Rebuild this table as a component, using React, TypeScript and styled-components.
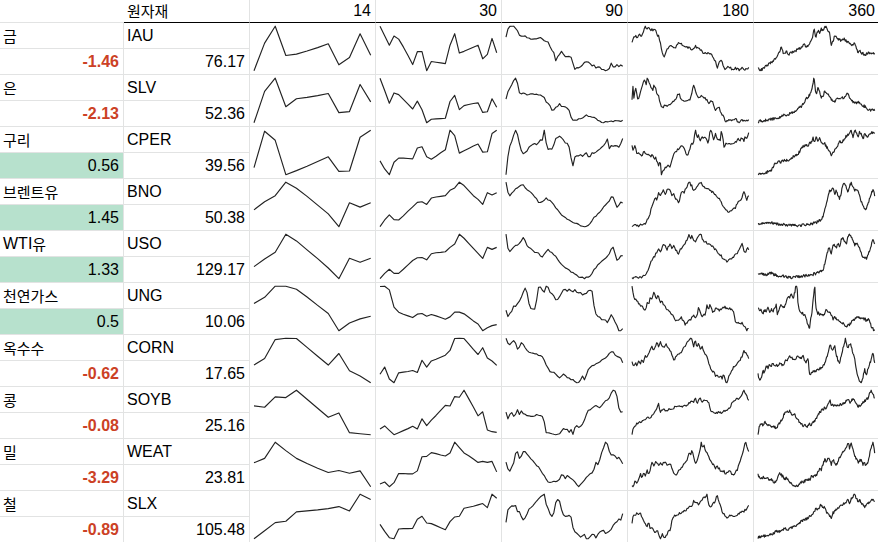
import React from "react";
import styled, { createGlobalStyle, css } from "styled-components";

const GlobalStyle = createGlobalStyle`
  html, body {
    margin: 0;
    padding: 0;
    background: #ffffff;
    overflow: hidden;
  }
  body {
    font-family: "Liberation Sans", Arial, "Noto Sans CJK KR", sans-serif;
  }
`;

const GRID = "#e2e3e3";

type Row = {
  name: string;
  change: string;
  ticker: string;
  price: string;
  s14: number[];
  s30: number[];
  a90: string;
  a180: string;
  a360: string;
};

// y values are "screen down" units: larger = lower on the chart
const ROWS: Row[] = [
  {
    name: "금", change: "-1.46", ticker: "IAU", price: "76.17",
    s14: [142, 62, 13, 98, 94, 85, 75, 64, 125, 104, 35, 97],
    s30: [14, 42, 70, 43, 52, 75, 100, 127, 89, 89, 145, 118, 120, 122, 124, 70, 36, 93, 88, 82, 76, 70, 110, 97, 50, 92],
    a90: "0,47 5,22 12,13 22,13 30,20 37,30 42,42 50,45 57,42 65,47 75,50 85,52 95,52 100,45 105,50 115,55 122,60 128,62 135,80 140,90 145,90 148,125 150,110 160,95 168,85 175,100 185,102 195,105 200,120 205,140 215,135 225,133 232,125 240,115 250,120 256,130 262,125 270,135 280,132 290,140 300,145 310,135 315,120 320,133 330,130 335,125 340,132 345,125 350,130",
    a180: "0,60 5,45 10,40 15,50 22,35 28,40 35,25 40,15 45,25 50,13 55,25 60,22 65,25 70,20 75,40 80,40 85,60 90,90 95,103 100,95 105,80 110,75 120,70 130,75 140,60 148,65 155,70 160,72 168,75 175,75 180,85 185,80 190,70 195,75 205,82 215,90 225,90 235,92 240,100 245,110 250,115 255,135 260,120 265,110 270,115 278,140 285,130 295,132 300,140 310,135 320,140 330,133 340,138 350,133",
    a360: "0,140 10,145 20,138 30,130 40,122 50,115 55,108 60,100 65,90 70,78 75,95 80,100 85,90 90,100 100,95 110,90 120,85 130,80 140,70 145,78 150,75 160,60 165,45 168,20 172,50 175,45 180,30 185,35 190,25 195,30 200,20 205,15 210,30 215,40 220,75 225,60 230,45 240,55 250,60 260,55 270,65 280,70 290,68 295,80 300,95 305,90 310,95 320,100 330,95 340,100 350,97",
  },
  {
    name: "은", change: "-2.13", ticker: "SLV", price: "52.36",
    s14: [141, 51, 13, 95, 72, 68, 63, 57, 112, 109, 31, 81],
    s30: [14, 50, 87, 57, 62, 76, 90, 104, 81, 106, 144, 134, 133, 132, 131, 82, 64, 106, 94, 91, 88, 86, 114, 112, 74, 99],
    a90: "0,74 5,55 10,45 18,30 25,15 30,13 35,30 40,55 45,60 55,58 65,62 75,58 85,60 95,62 105,65 115,70 122,85 130,90 135,100 140,110 145,103 155,95 160,88 165,95 175,98 185,102 190,110 195,125 200,138 210,135 220,133 230,130 240,122 250,125 260,127 270,132 280,138 290,142 300,140 310,138 320,140 330,137 340,140 350,136",
    a180: "0,80 3,35 6,80 10,40 14,60 18,80 22,70 28,50 33,30 38,20 42,40 47,13 52,35 56,40 62,55 66,35 70,45 75,60 80,65 85,90 90,100 95,95 100,95 110,90 120,88 130,75 140,60 145,70 150,80 160,78 168,80 175,75 180,55 185,35 190,50 195,65 200,70 210,68 220,72 230,85 240,80 245,95 250,110 255,100 260,95 265,110 270,120 275,125 280,138 290,133 300,135 310,130 320,140 330,135 340,138 350,133",
    a360: "0,145 20,142 40,138 60,135 70,128 80,124 90,126 100,118 110,115 120,108 130,100 140,85 145,75 150,72 155,65 160,55 165,35 168,12 172,50 175,70 180,45 185,60 190,75 195,70 200,55 210,65 220,80 230,85 240,75 250,78 260,70 270,60 275,75 280,82 290,90 300,88 310,95 320,100 330,110 340,112 350,110",
  },
  {
    name: "구리", change: "0.56", ticker: "CPER", price: "39.56",
    s14: [124, 16, 43, 145, 133, 120, 106, 92, 135, 134, 34, 13],
    s30: [104, 128, 145, 108, 96, 96, 97, 98, 66, 62, 92, 99, 90, 80, 71, 13, 29, 81, 74, 67, 60, 54, 78, 77, 23, 13],
    a90: "0,145 4,95 8,85 12,60 18,45 25,25 30,15 35,30 40,55 45,70 50,90 55,75 60,90 65,70 75,60 85,55 90,60 95,55 105,40 110,45 115,13 120,50 125,70 130,75 135,60 140,80 145,50 150,40 155,35 165,35 170,40 175,50 180,55 185,55 190,65 195,95 200,125 205,95 215,90 225,85 230,90 240,80 250,100 255,85 260,80 265,85 275,75 285,65 295,60 305,40 310,70 315,60 320,65 330,60 340,65 350,40",
    a180: "0,60 3,78 8,65 12,70 15,85 20,80 25,85 30,90 35,80 45,85 55,95 60,85 65,100 70,95 75,105 80,120 85,105 88,145 92,130 100,125 108,115 115,120 120,100 125,90 130,80 140,70 148,60 155,65 160,80 168,90 172,75 178,60 185,55 190,15 195,40 200,35 205,50 210,40 215,45 220,35 228,60 235,15 240,30 245,45 250,30 255,40 260,50 265,45 268,20 272,35 275,65 280,60 290,55 300,58 310,52 320,45 325,48 330,40 335,50 340,35 345,45 350,30",
    a360: "0,140 15,142 30,135 40,130 50,115 60,105 70,108 80,100 90,105 100,95 110,90 120,85 130,70 140,60 150,60 160,50 165,40 170,55 175,35 180,50 185,40 190,55 200,55 205,65 210,70 215,75 220,90 225,80 230,75 235,65 240,60 245,50 250,55 260,40 270,30 275,25 280,20 285,35 290,15 295,25 300,35 305,20 310,30 315,40 320,30 330,35 340,25 350,22",
  },
  {
    name: "브렌트유", change: "1.45", ticker: "BNO", price: "50.38",
    s14: [94, 70, 52, 12, 30, 54, 80, 106, 144, 73, 86, 73],
    s30: [144, 124, 109, 123, 124, 112, 98, 85, 72, 70, 78, 59, 56, 54, 52, 36, 29, 12, 22, 37, 52, 63, 78, 43, 50, 43],
    a90: "0,14 5,40 10,55 15,50 25,40 35,30 45,25 55,25 60,35 70,40 80,50 90,60 100,75 110,70 120,62 125,65 135,70 145,80 155,95 165,105 175,115 185,120 195,125 205,130 215,135 225,140 235,143 245,138 255,130 265,115 275,105 285,95 295,85 305,75 315,60 320,55 325,70 330,80 335,95 340,75 350,73",
    a180: "0,144 10,140 20,142 30,140 40,135 50,120 55,105 60,85 65,75 70,60 75,70 80,50 85,55 90,45 95,40 100,55 105,40 110,35 115,45 120,60 125,50 130,65 135,70 140,80 145,55 150,45 155,50 160,40 165,35 170,15 175,25 180,30 185,45 190,40 195,35 200,20 205,18 210,25 215,30 220,35 230,40 240,45 250,55 260,65 270,80 280,95 290,102 300,100 310,90 320,75 330,65 335,45 340,58 345,70 350,55",
    a360: "0,135 20,133 40,130 60,135 80,137 100,138 120,140 140,137 160,135 175,130 185,125 195,115 200,95 205,80 210,50 215,35 220,40 225,25 230,45 235,35 240,55 245,60 250,40 255,20 260,15 265,30 270,45 275,20 280,15 285,25 290,35 295,30 300,40 305,55 310,70 315,80 320,90 325,88 330,75 335,60 340,45 345,30 350,50",
  },
  {
    name: "WTI유", change: "1.33", ticker: "USO", price: "129.17",
    s14: [109, 86, 66, 12, 32, 59, 85, 113, 145, 84, 96, 84],
    s30: [144, 128, 116, 128, 128, 116, 103, 90, 82, 81, 88, 70, 67, 66, 64, 51, 41, 12, 24, 39, 54, 69, 84, 51, 57, 51],
    a90: "0,16 5,55 10,65 15,60 25,50 35,45 45,35 55,20 60,45 70,55 80,60 90,70 95,60 100,75 110,80 120,65 125,60 135,68 145,75 155,88 165,100 175,112 185,118 195,125 205,130 215,138 225,140 235,143 245,140 255,135 260,125 265,118 275,105 285,95 295,88 305,80 315,60 320,50 325,65 330,80 335,100 340,80 350,78",
    a180: "0,144 10,140 20,142 30,140 40,135 50,115 55,100 60,90 65,85 70,75 75,70 80,60 85,65 90,55 95,45 100,48 105,60 110,50 115,40 120,55 125,45 130,60 135,65 140,75 145,60 150,55 155,50 160,40 165,30 170,15 175,30 180,20 185,35 190,40 195,30 200,20 205,13 210,25 215,35 225,40 235,45 245,55 255,65 265,75 275,90 285,95 295,90 305,80 315,70 325,55 330,45 335,60 340,70 345,55 350,60",
    a360: "0,130 20,132 40,128 60,135 80,137 100,140 120,138 140,135 160,132 175,128 185,125 195,118 200,100 205,80 210,60 215,55 220,70 225,50 230,45 235,55 240,40 245,50 250,30 255,25 260,35 265,45 270,20 275,15 280,25 285,30 290,45 295,40 300,50 305,55 310,70 315,80 320,85 325,85 330,75 335,60 340,45 345,30 350,45",
  },
  {
    name: "천연가스", change: "0.5", ticker: "UNG", price: "10.06",
    s14: [64, 46, 13, 13, 22, 45, 70, 94, 145, 122, 110, 102],
    s30: [14, 13, 24, 75, 90, 96, 101, 106, 96, 94, 102, 97, 101, 106, 111, 104, 90, 90, 95, 105, 116, 125, 145, 136, 130, 127],
    a90: "0,85 5,100 10,95 15,90 20,80 25,70 30,75 35,65 40,60 45,55 50,45 55,30 60,25 65,45 70,75 75,80 80,82 85,82 90,75 95,30 100,20 105,25 110,35 115,40 120,25 123,12 127,30 132,40 140,45 145,50 150,60 155,55 160,50 165,45 170,35 175,30 185,35 190,30 195,35 200,40 205,30 210,35 215,45 220,40 225,40 230,45 240,40 250,35 255,30 260,40 265,80 270,95 275,100 285,105 290,110 295,105 300,110 305,115 310,105 315,95 320,100 325,110 330,120 335,125 340,140 345,135 350,130",
    a180: "0,14 3,30 8,55 12,50 18,60 22,65 27,70 32,75 37,80 42,85 45,60 50,70 55,45 60,55 65,30 70,45 75,50 78,40 82,50 86,60 90,55 95,70 100,75 105,80 110,85 115,90 120,95 125,100 130,110 135,115 140,110 148,105 155,115 160,125 165,120 170,115 175,110 180,105 185,95 190,105 195,100 200,75 205,90 210,100 215,95 220,95 225,70 230,80 235,65 240,85 245,90 250,80 255,75 260,85 265,80 270,78 280,75 290,80 300,78 305,90 310,115 315,120 320,118 330,120 335,125 340,130 345,140 350,135",
    a360: "0,80 5,90 10,85 15,95 20,85 25,90 30,80 35,95 40,85 45,90 50,80 55,70 58,100 62,90 65,80 70,70 75,80 80,75 85,60 90,55 95,50 100,45 105,55 110,40 113,25 117,20 120,75 125,85 130,90 135,95 140,100 145,110 150,125 155,135 158,110 162,90 165,60 168,40 170,12 172,60 175,85 178,95 182,90 185,100 190,95 195,100 200,95 205,85 210,95 215,90 220,100 225,110 230,105 240,115 250,120 260,125 265,130 270,120 275,125 280,115 290,110 300,105 310,110 320,108 325,115 330,110 335,115 340,130 345,135 350,140",
  },
  {
    name: "옥수수", change: "-0.62", ticker: "CORN", price: "17.65",
    s14: [92, 73, 17, 13, 14, 40, 66, 92, 58, 109, 124, 144],
    s30: [119, 98, 133, 144, 115, 113, 111, 108, 114, 78, 98, 80, 75, 69, 63, 49, 14, 13, 14, 30, 46, 61, 41, 71, 80, 93],
    a90: "0,14 5,30 10,35 20,25 25,18 30,35 35,50 40,40 45,30 50,30 55,42 60,48 70,55 80,60 90,62 100,65 110,70 120,90 125,100 130,110 135,112 145,115 150,120 155,125 160,128 170,120 175,115 180,125 190,130 200,135 210,140 220,145 225,130 230,125 235,135 240,125 245,110 250,95 255,100 260,90 265,95 275,85 285,80 295,75 305,65 315,55 320,50 325,60 330,65 340,72 345,75 350,85",
    a180: "0,88 5,95 10,90 15,95 20,85 25,90 30,80 35,85 40,70 45,75 50,60 55,55 60,40 65,55 70,40 75,30 80,45 85,30 90,40 95,45 100,35 105,40 110,45 115,55 120,65 125,80 130,75 135,70 140,65 145,60 150,55 155,45 160,40 165,30 170,25 175,15 180,20 185,40 190,25 195,45 200,35 205,50 210,40 215,55 220,65 225,70 230,90 235,100 240,115 245,110 250,125 255,120 260,130 265,125 270,135 275,120 280,140 285,145 290,130 295,120 300,110 305,100 310,95 315,90 320,85 325,80 330,70 335,55 340,60 345,65 350,80",
    a360: "0,115 5,130 10,120 15,105 20,110 25,90 30,95 35,85 40,90 45,80 50,95 55,85 60,90 65,80 70,85 75,88 80,80 85,75 90,70 95,60 100,65 105,70 110,75 115,70 120,60 125,65 130,70 135,60 140,75 145,80 150,70 155,115 160,110 170,105 180,100 190,95 195,90 200,85 205,70 210,55 215,30 220,40 225,45 230,30 235,60 240,75 245,85 250,60 255,40 260,25 262,15 265,30 270,45 275,25 280,35 285,55 290,70 295,100 300,125 305,130 310,140 315,120 320,100 325,115 330,95 335,85 340,70 345,55 350,80",
  },
  {
    name: "콩", change: "-0.08", ticker: "SOYB", price: "25.16",
    s14: [59, 63, 32, 34, 12, 39, 66, 93, 80, 139, 142, 145],
    s30: [128, 119, 132, 145, 139, 133, 127, 120, 128, 98, 118, 102, 88, 73, 58, 60, 32, 34, 13, 38, 63, 89, 77, 131, 136, 138],
    a90: "0,78 5,100 10,85 15,80 20,75 25,100 30,80 35,70 40,85 45,75 50,80 60,85 70,90 80,92 90,85 100,88 110,90 115,105 120,135 130,140 140,142 150,143 160,140 165,135 170,125 175,130 180,125 185,130 190,135 195,130 200,145 205,125 210,115 215,120 220,125 230,110 240,90 245,70 250,75 260,65 270,60 280,65 290,55 300,45 310,35 320,15 325,12 330,25 335,40 340,75 345,78 350,78",
    a180: "0,145 3,125 10,115 20,110 30,105 40,100 50,95 60,90 70,75 75,65 80,55 85,80 90,70 100,75 110,70 120,68 130,65 140,60 150,65 160,60 170,55 180,45 185,50 190,40 195,55 200,45 205,40 210,50 220,45 230,50 235,75 240,80 250,82 260,78 270,80 280,75 290,70 295,65 300,50 310,45 320,40 330,30 335,15 340,25 345,35 350,45",
    a360: "0,145 5,120 10,115 15,120 20,110 25,115 30,118 35,120 40,125 45,120 50,125 55,128 60,120 70,105 75,95 80,80 85,75 90,80 95,75 100,85 105,90 110,85 115,95 120,105 125,110 130,115 135,120 140,118 145,125 150,120 155,115 160,120 165,110 170,105 175,100 180,90 185,80 190,75 195,70 200,65 205,68 210,55 215,40 220,60 225,55 230,60 240,58 250,55 260,50 265,45 270,40 275,50 280,45 285,35 290,48 295,55 300,62 305,60 310,55 315,50 320,45 325,40 330,35 335,20 340,15 345,25 350,35",
  },
  {
    name: "밀", change: "-3.29", ticker: "WEAT", price: "23.81",
    s14: [73, 60, 12, 37, 60, 75, 89, 102, 96, 104, 97, 144],
    s30: [136, 130, 144, 132, 105, 105, 106, 106, 97, 55, 54, 43, 46, 50, 53, 44, 12, 28, 44, 52, 62, 72, 69, 72, 69, 100],
    a90: "0,72 5,90 10,100 15,95 20,80 25,75 30,40 35,45 40,65 45,60 50,45 55,40 60,50 65,55 70,60 80,70 90,80 95,85 100,90 105,100 110,105 115,110 120,120 125,128 135,130 145,128 155,125 160,122 165,110 170,105 175,115 180,120 185,110 195,120 205,128 210,135 215,140 220,145 225,135 230,130 235,125 240,118 250,110 255,100 260,105 265,90 270,75 275,80 280,70 285,55 290,35 295,30 300,13 305,25 310,45 315,55 320,50 325,55 330,60 335,65 340,60 345,70 350,80",
    a180: "0,145 5,140 10,130 15,140 20,125 25,110 30,120 35,105 40,120 45,100 50,115 55,95 60,80 65,90 70,75 75,80 80,85 85,80 90,90 95,80 100,75 105,85 110,80 115,85 120,95 125,105 130,115 135,110 140,100 145,95 150,90 155,85 160,75 165,70 170,60 172,40 175,60 180,45 185,65 190,80 195,75 200,60 205,40 208,20 212,40 215,30 220,45 225,50 230,60 235,75 240,80 245,85 250,100 255,90 260,95 265,100 270,105 275,100 280,110 285,108 290,100 295,105 300,110 305,115 310,105 315,100 320,85 325,75 330,60 335,45 340,20 345,35 350,50",
    a360: "0,110 5,115 10,120 15,115 20,118 25,122 30,118 35,125 40,120 45,128 50,132 55,125 60,115 65,105 70,110 75,115 80,120 85,118 90,125 95,130 100,135 105,140 110,142 115,138 120,140 125,135 130,130 140,128 150,120 155,125 160,115 165,118 170,110 175,112 180,100 185,90 190,95 195,80 200,65 205,75 210,60 215,70 220,80 225,65 230,75 235,80 240,70 245,60 250,55 255,45 260,40 265,30 270,15 275,35 280,20 285,40 290,55 295,65 300,75 305,70 310,65 315,80 320,75 325,85 330,70 335,50 340,30 345,15 350,45",
  },
  {
    name: "철", change: "-0.89", ticker: "SLX", price: "105.48",
    s14: [145, 121, 97, 93, 65, 62, 59, 55, 49, 62, 12, 28],
    s30: [102, 123, 142, 145, 116, 115, 115, 114, 87, 78, 98, 100, 106, 112, 118, 94, 80, 78, 54, 51, 48, 44, 40, 52, 12, 24],
    a90: "0,96 3,60 8,55 12,50 18,45 25,50 30,45 35,65 40,65 45,75 50,85 55,90 60,75 65,65 70,55 80,45 90,35 100,25 110,15 115,12 120,40 125,50 130,65 135,75 140,80 145,60 150,35 155,30 160,30 165,50 170,70 175,80 180,75 190,75 195,80 200,105 205,120 210,125 215,130 220,135 225,140 230,135 235,130 240,140 245,145 250,140 255,135 260,125 265,130 270,140 275,130 280,125 285,120 290,115 295,120 300,130 305,125 310,120 315,115 320,105 325,100 330,95 335,90 340,85 345,90 350,68",
    a180: "0,95 3,80 8,75 15,70 20,75 25,65 30,80 35,95 40,100 45,105 50,95 55,115 60,110 65,120 70,125 75,115 80,130 85,145 90,130 95,135 100,140 105,130 110,120 115,115 120,90 125,80 130,75 140,70 150,65 160,60 170,55 175,45 180,50 185,30 190,40 195,35 200,45 205,35 210,30 215,25 220,20 225,15 230,40 235,50 240,45 245,40 250,35 255,15 260,30 265,45 270,65 275,70 280,75 285,85 290,80 295,75 300,70 305,80 310,75 320,70 330,65 340,60 345,55 350,45",
    a360: "0,145 10,142 20,140 30,138 40,135 50,130 55,125 60,128 70,122 80,118 90,120 100,115 110,110 120,105 130,95 140,92 150,85 160,75 165,70 170,65 175,55 180,60 185,50 190,45 195,55 200,50 205,65 210,75 215,80 220,85 225,70 230,65 240,55 245,50 250,45 260,40 265,35 270,30 275,40 280,25 285,20 290,15 295,25 300,35 305,30 310,40 315,45 320,50 325,45 330,40 340,30 345,25 350,35",
  },
];

const PERIODS = ["14", "30", "90", "180", "360"];

// small deterministic random so the long sparklines get their wiggle
function rng(seed: number) {
  let a = seed >>> 0;
  return () => {
    a = (a + 0x6d2b79f5) >>> 0;
    let t = a;
    t = Math.imul(t ^ (t >>> 15), t | 1);
    t ^= t + Math.imul(t ^ (t >>> 7), t | 61);
    return ((t ^ (t >>> 14)) >>> 0) / 4294967296;
  };
}

function fromAnchors(spec: string, n: number, amp: number, seed: number): number[] {
  const pts = spec.split(" ").map((p) => p.split(",").map(Number));
  const rand = rng(seed);
  const out: number[] = [];
  let k = 0;
  for (let i = 0; i < n; i++) {
    const x = (i / (n - 1)) * 350;
    while (k < pts.length - 2 && pts[k + 1][0] < x) k++;
    const [x0, y0] = pts[k];
    const [x1, y1] = pts[k + 1];
    const t = x1 === x0 ? 0 : Math.min(1, Math.max(0, (x - x0) / (x1 - x0)));
    const y = y0 + (y1 - y0) * t;
    out.push(y + (rand() - 0.5) * amp);
  }
  return out;
}

const SPARK_W = 125;
const SPARK_H = 51;

const Sheet = styled.div`
  display: grid;
  grid-template-columns: 124px repeat(6, 126px);
  grid-template-rows: 23px;
  grid-auto-rows: 26px;
  width: 880px;
  font-size: 16px;
  color: #000000;
`;

const cellBase = css`
  box-sizing: border-box;
  display: flex;
  align-items: flex-end;
  padding: 0 4px 3px 3px;
  line-height: 18px;
  white-space: nowrap;
  overflow: hidden;
  border-right: 1px solid ${GRID};
  border-bottom: 1px solid ${GRID};
`;

const HeaderBlank = styled.div`
  border-bottom: 1px solid ${GRID};
`;

const HeaderCell = styled.div<{ $align: "left" | "right" }>`
  ${cellBase};
  padding-bottom: 2px;
  border-bottom-color: #000000;
  justify-content: ${(p) => (p.$align === "right" ? "flex-end" : "flex-start")};
`;

const NameCell = styled.div`
  ${cellBase};
`;

const TickerCell = styled.div`
  ${cellBase};
`;

const PriceCell = styled.div`
  ${cellBase};
  justify-content: flex-end;
`;

const ChangeCell = styled.div<{ $up: boolean }>`
  ${cellBase};
  justify-content: flex-end;
  background: ${(p) => (p.$up ? "#b7e1cd" : "transparent")};
  color: ${(p) => (p.$up ? "#000000" : "#cc4125")};
  font-weight: ${(p) => (p.$up ? 400 : 700)};
`;

const SparkCell = styled.div`
  box-sizing: border-box;
  grid-row: span 2;
  border-right: 1px solid ${GRID};
  border-bottom: 1px solid ${GRID};
  overflow: hidden;
`;

const SparkSvg = styled.svg`
  display: block;
  width: ${SPARK_W}px;
  height: ${SPARK_H}px;
`;

const Ko = styled.span`
  font-family: "Noto Sans CJK KR", sans-serif;
  font-size: 15px;
`;

function Text({ value }: { value: string }) {
  const parts = value.split(/([\uAC00-\uD7A3]+)/).filter(Boolean);
  return (
    <>
      {parts.map((p, i) =>
        /[\uAC00-\uD7A3]/.test(p) ? <Ko key={i}>{p}</Ko> : <React.Fragment key={i}>{p}</React.Fragment>
      )}
    </>
  );
}

function Sparkline({ values }: { values: number[] }) {
  const padL = 4;
  const padR = 4.3;
  const padT = 3.2;
  const padB = 3.3;
  const min = Math.min(...values);
  const max = Math.max(...values);
  const span = max - min || 1;
  const n = values.length;
  const d = values
    .map((v, i) => {
      const x = padL + (i / (n - 1)) * (SPARK_W - padL - padR);
      const y = padT + ((v - min) / span) * (SPARK_H - padT - padB);
      return `${i ? "L" : "M"}${x.toFixed(2)},${y.toFixed(2)}`;
    })
    .join("");
  return (
    <SparkSvg viewBox={`0 0 ${SPARK_W} ${SPARK_H}`}>
      <path d={d} fill="none" stroke="#222222" strokeWidth={1.15} strokeLinejoin="round" />
    </SparkSvg>
  );
}

export default function App() {
  const series = React.useMemo(
    () =>
      ROWS.map((r, i) => [
        r.s14,
        r.s30,
        fromAnchors(r.a90, 62, 4, 101 + i),
        fromAnchors(r.a180, 124, 7, 201 + i),
        fromAnchors(r.a360, 200, 8, 301 + i),
      ]),
    []
  );

  return (
    <>
      <GlobalStyle />
      <Sheet>
        <HeaderBlank />
        <HeaderCell $align="left">
          <Text value="원자재" />
        </HeaderCell>
        {PERIODS.map((p) => (
          <HeaderCell key={p} $align="right">
            {p}
          </HeaderCell>
        ))}
        {ROWS.map((r, i) => (
          <React.Fragment key={r.ticker}>
            <NameCell>
              <Text value={r.name} />
            </NameCell>
            <TickerCell>{r.ticker}</TickerCell>
            {series[i].map((s, j) => (
              <SparkCell key={j}>
                <Sparkline values={s} />
              </SparkCell>
            ))}
            <ChangeCell $up={!r.change.startsWith("-")}>{r.change}</ChangeCell>
            <PriceCell>{r.price}</PriceCell>
          </React.Fragment>
        ))}
      </Sheet>
    </>
  );
}
